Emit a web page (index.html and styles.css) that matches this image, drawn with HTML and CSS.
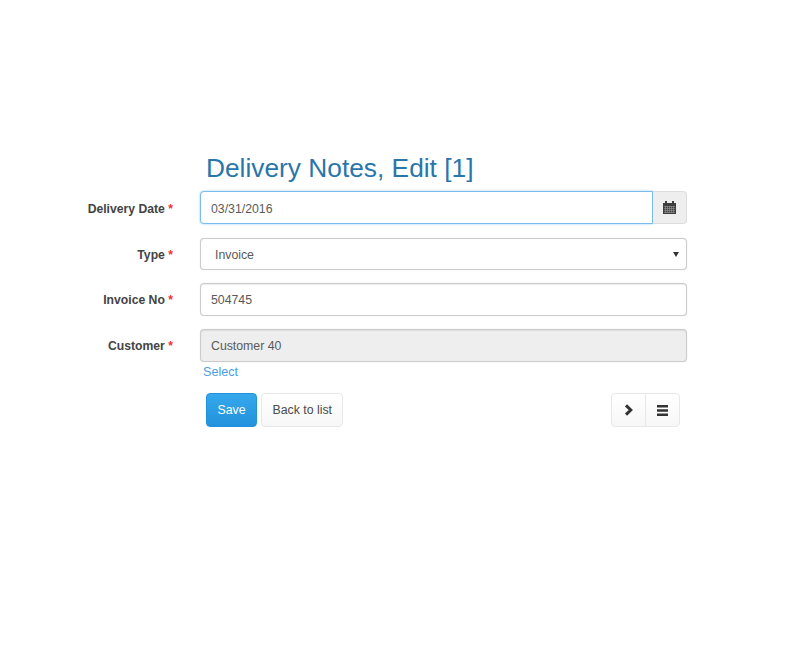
FILE: index.html
```html
<!DOCTYPE html>
<html lang="en">
<head>
    <meta charset="UTF-8">
    <title>Delivery Notes, Edit [1]</title>
    <link rel="stylesheet" href="styles.css">
</head>
<body>
    <div class="page">
        <h1 class="page-title">Delivery Notes, Edit [1]</h1>
        <form class="edit-form">
            <div class="form-row low-text">
                <label class="form-label">Delivery Date <span class="required">*</span></label>
                <div class="input-group">
                    <input class="form-control focused" type="text" value="03/31/2016">
                    <span class="input-addon">
                        <svg width="13" height="13" viewBox="0 0 13 13">
                            <path fill="#3d3d3d" d="M2 0h2v2h5V0h2v2h2v11H0V2h2z"/>
                            <path stroke="#999" stroke-width=".6" fill="none" d="M1 5.5h11M1 7.5h11M1 9.5h11M1 11.5h11M2.5 5v7M4.5 5v7M6.5 5v7M8.5 5v7M10.5 5v7"/>
                        </svg>
                    </span>
                </div>
            </div>
            <div class="form-row low-text type-row">
                <label class="form-label">Type <span class="required">*</span></label>
                <div class="select-box">
                    <span class="select-value">Invoice</span>
                    <span class="select-arrow"></span>
                </div>
            </div>
            <div class="form-row invoice-row">
                <label class="form-label">Invoice No <span class="required">*</span></label>
                <input class="form-control" type="text" value="504745">
            </div>
            <div class="form-row customer-row">
                <label class="form-label">Customer <span class="required">*</span></label>
                <input class="form-control" type="text" value="Customer 40" disabled>
            </div>
            <a class="select-link" href="#">Select</a>
            <div class="form-actions">
                <button class="btn btn-primary" type="button">Save</button>
                <button class="btn" type="button">Back to list</button>
                <div class="btn-group">
                    <button class="btn btn-icon" type="button">
                        <svg width="10" height="12" viewBox="0 0 10 12"><path fill="none" stroke="#333" stroke-width="3" d="M2 1.4 6.8 6 2 10.6"/></svg>
                    </button>
                    <button class="btn btn-icon" type="button">
                        <svg width="11" height="11" viewBox="0 0 11 11"><path fill="#333" d="M0 0h11v2.6H0zM0 4.2h11v2.6H0zM0 8.4h11V11H0z"/></svg>
                    </button>
                </div>
            </div>
        </form>
    </div>
</body>
</html>
```

FILE: styles.css
```css
body {
    font-family: "Liberation Sans", Arial, sans-serif;
    font-size: 13px;
    color: #5a5a5a;
    background-color: #fff;
    margin: 0;
}

.page {
    width: 687px;
    padding-top: 152px;
}

.page-title {
    margin: 0 0 7px 206px;
    font-size: 26.3px;
    font-weight: normal;
    line-height: 32px;
    color: #2a76ab;
}

.form-row {
    display: flex;
    align-items: center;
    margin-bottom: 14px;
}

.type-row,
.invoice-row {
    margin-bottom: 13px;
}

.customer-row {
    margin-bottom: 0;
}

.form-label {
    width: 173px;
    margin-right: 27px;
    flex-shrink: 0;
    text-align: right;
    font-weight: bold;
    font-size: 12.2px;
    color: #444;
}

.low-text .form-label {
    padding-top: 2px;
}

.required {
    color: #e33;
}

.form-control {
    flex: 1;
    min-width: 0;
    box-sizing: border-box;
    height: 33px;
    padding: 0 10px;
    font-family: inherit;
    font-size: 12.3px;
    color: #5a5a5a;
    background: #fff;
    border: 1px solid #ccc;
    border-radius: 4px;
    outline: none;
    box-shadow: inset 0 1px 1px rgba(0, 0, 0, 0.08), 0 0 1px rgba(0, 0, 0, 0.2);
}

.form-control.focused {
    padding-top: 2px;
    border-color: #7bbcee;
    border-radius: 4px 0 0 4px;
    box-shadow: 0 0 2px rgba(102, 175, 233, 0.8);
}

.form-control:disabled {
    background: #eee;
    color: #5a5a5a;
}

.input-group {
    flex: 1;
    display: flex;
}

.input-addon {
    width: 34px;
    height: 33px;
    box-sizing: border-box;
    display: flex;
    align-items: center;
    justify-content: center;
    background: #eee;
    border: 1px solid #ddd;
    border-left: none;
    border-radius: 0 4px 4px 0;
}

.select-box {
    flex: 1;
    box-sizing: border-box;
    height: 32px;
    display: flex;
    align-items: center;
    justify-content: space-between;
    padding: 0 7px 0 14px;
    font-size: 12.3px;
    background: #fff;
    border: 1px solid #ccc;
    border-radius: 4px;
    box-shadow: 0 0 1px rgba(0, 0, 0, 0.2);
}

.select-value {
    padding-top: 2px;
}

.select-arrow {
    border-left: 3px solid transparent;
    border-right: 3px solid transparent;
    border-top: 5px solid #333;
}

.select-link {
    display: block;
    margin: 3px 0 0 203px;
    line-height: 15px;
    font-size: 12.6px;
    color: #4aa0e2;
    text-decoration: none;
}

.form-actions {
    display: flex;
    align-items: stretch;
    gap: 4px;
    margin: 13px 7px 0 206px;
}

.btn {
    height: 34px;
    padding: 0 10.5px;
    font-family: inherit;
    font-size: 12.3px;
    color: #4a4a4a;
    background: linear-gradient(#fff, #f7f7f7);
    border: 1px solid #e8e8e8;
    border-radius: 4px;
}

.btn-primary {
    width: 51px;
    padding: 0;
    color: #fff;
    background: linear-gradient(#36a8ec, #2192dc);
    border-color: #2192dc;
}

.btn-group {
    display: flex;
    margin-left: auto;
}

.btn-icon {
    width: 35px;
    padding: 0;
    display: flex;
    align-items: center;
    justify-content: center;
    border-radius: 0 4px 4px 0;
    margin-left: -1px;
}

.btn-icon:first-child {
    border-radius: 4px 0 0 4px;
    margin-left: 0;
}
```
